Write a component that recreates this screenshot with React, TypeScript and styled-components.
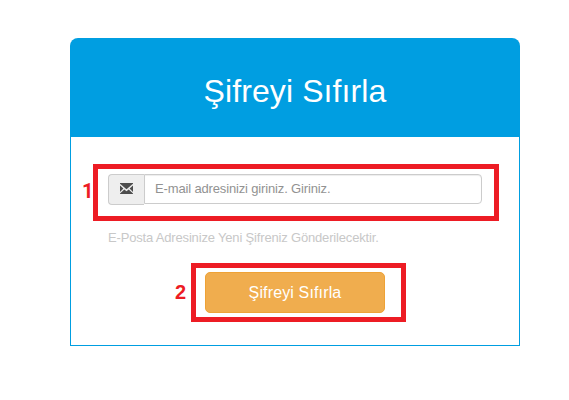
import React from 'react';
import styled, { createGlobalStyle } from 'styled-components';

const GlobalStyle = createGlobalStyle`
  * { box-sizing: border-box; }
  body {
    margin: 0;
    background: #fff;
    font-family: "Liberation Sans", Arial, sans-serif;
  }
`;

const Page = styled.main`
  display: flex;
  justify-content: center;
  width: 569px;
  height: 400px;
  padding: 38px 49px 54px 70px;
  overflow: hidden;
`;

const Card = styled.section`
  position: relative;
  display: flex;
  flex-direction: column;
  width: 450px;
  height: 308px;
`;

const CardHeader = styled.header`
  display: flex;
  align-items: center;
  justify-content: center;
  height: 99px;
  padding-top: 7px;
  background: #009ee1;
  border-radius: 8px 8px 0 0;
`;

const Title = styled.h1`
  margin: 0;
  color: #fff;
  font-size: 32px;
  font-weight: 400;
  letter-spacing: 0.1px;
  line-height: 40px;
  white-space: nowrap;
`;

const Form = styled.form`
  display: flex;
  flex: 1;
  flex-direction: column;
  padding: 37px 37px 0;
  border: 1px solid #009ee1;
  border-top: 0;
`;

const InputGroup = styled.div`
  display: flex;
  align-items: flex-start;
  height: 31px;
`;

const Addon = styled.span`
  display: flex;
  align-items: center;
  justify-content: center;
  width: 36px;
  height: 31px;
  padding-bottom: 2px;
  background: #eee;
  border: 1px solid #ccc;
  border-right: 0;
  border-radius: 4px 0 0 4px;
`;

const EmailInput = styled.input`
  width: 338px;
  height: 30px;
  padding: 0 10px 1px;
  font-family: inherit;
  font-size: 13px;
  letter-spacing: -0.15px;
  background: #fff;
  border: 1px solid #ccc;
  border-radius: 0 4px 4px 0;
  box-shadow: inset 0 1px 1px rgba(0, 0, 0, 0.075);
  outline: 0;

  &::placeholder {
    color: #929292;
    opacity: 1;
  }
`;

const Hint = styled.p`
  margin: 24px 0 0;
  color: #c8c8c8;
  font-size: 13px;
  letter-spacing: -0.17px;
  line-height: 18px;
  white-space: nowrap;
`;

const SubmitButton = styled.button`
  align-self: center;
  width: 180px;
  height: 41px;
  margin: 25px 0 0;
  padding: 0;
  color: #fff;
  font-family: inherit;
  font-size: 16px;
  letter-spacing: 0.14px;
  background: #f0ad4e;
  border: 1px solid #eea236;
  border-radius: 5px;
`;

const Highlight = styled.div<{ $x: number; $y: number; $w: number; $h: number }>`
  position: absolute;
  left: ${(p) => p.$x}px;
  top: ${(p) => p.$y}px;
  width: ${(p) => p.$w}px;
  height: ${(p) => p.$h}px;
  border: 5px solid #ed1c24;
  pointer-events: none;
`;

const StepNumber = styled.span<{ $x: number; $y: number; $font?: string }>`
  position: absolute;
  left: ${(p) => p.$x}px;
  top: ${(p) => p.$y}px;
  color: #ed1c24;
  font-family: ${(p) => p.$font ?? '"Liberation Sans"'}, Arial, sans-serif;
  font-size: 20px;
  font-weight: 700;
  line-height: 22px;
`;

function EnvelopeIcon() {
  return (
    <svg width="13" height="11" viewBox="0 0 13 11" fill="#4d4d4d" aria-hidden="true">
      <path d="M0 0H13V.7L6.5 6.2 0 .7Z" />
      <path d="M0 2.6 3.4 5.6 0 9Z" />
      <path d="M13 2.6 9.6 5.6 13 9Z" />
      <path d="M4.3 6.5 6.5 8.3 8.7 6.5 13 10.6V11H0V10.6Z" />
    </svg>
  );
}

export default function App() {
  return (
    <>
      <GlobalStyle />
      <Page>
        <Card>
          <CardHeader>
            <Title>Şifreyi Sıfırla</Title>
          </CardHeader>
          <Form onSubmit={(e) => e.preventDefault()}>
            <InputGroup>
              <Addon>
                <EnvelopeIcon />
              </Addon>
              <EmailInput type="email" placeholder="E-mail adresinizi giriniz. Giriniz." />
            </InputGroup>
            <Hint>E-Posta Adresinize Yeni Şifreniz Gönderilecektir.</Hint>
            <SubmitButton type="submit">Şifreyi Sıfırla</SubmitButton>
          </Form>
          <StepNumber $x={12} $y={142} $font="Roboto">1</StepNumber>
          <Highlight $x={23} $y={126} $w={406} $h={57} />
          <StepNumber $x={105} $y={243}>2</StepNumber>
          <Highlight $x={121} $y={225} $w={215} $h={59} />
        </Card>
      </Page>
    </>
  );
}
